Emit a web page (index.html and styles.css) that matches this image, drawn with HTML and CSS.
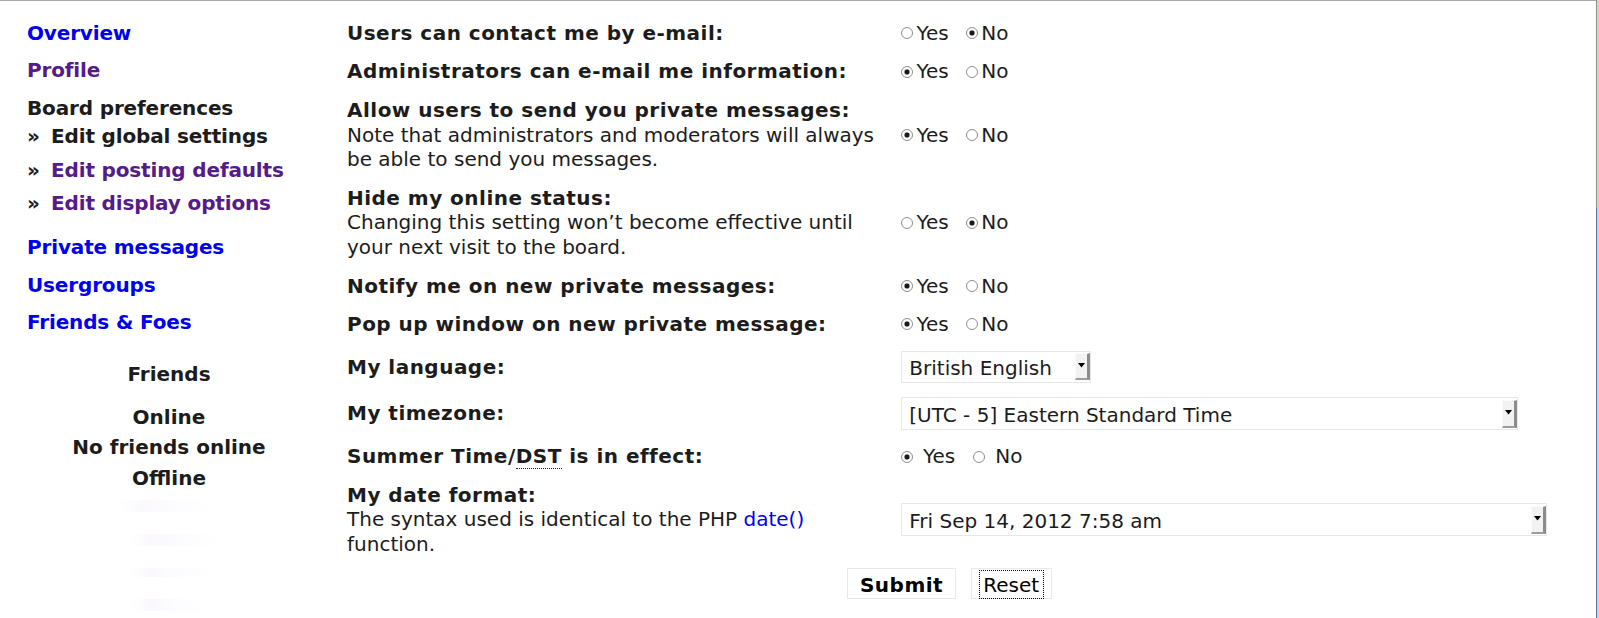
FILE: index.html
```html
<!DOCTYPE html>
<html lang="en">
<head>
<meta charset="utf-8">
<title>User Control Panel - Edit global settings</title>
<link rel="stylesheet" href="styles.css">
</head>
<body>
<div class="page">
  <nav class="sidebar">
    <ul class="nav">
      <li class="nav-item"><a class="link" href="#">Overview</a></li>
      <li class="nav-item"><a class="link visited" href="#">Profile</a></li>
      <li class="nav-item active">
        <span class="nav-head">Board preferences</span>
        <ul class="subnav">
          <li><span class="raquo">»</span><span class="current">Edit global settings</span></li>
          <li><span class="raquo">»</span><a class="link visited" href="#">Edit posting defaults</a></li>
          <li><span class="raquo">»</span><a class="link visited" href="#">Edit display options</a></li>
        </ul>
      </li>
      <li class="nav-item"><a class="link" href="#">Private messages</a></li>
      <li class="nav-item"><a class="link" href="#">Usergroups</a></li>
      <li class="nav-item"><a class="link" href="#">Friends &amp; Foes</a></li>
    </ul>
    <div class="friends">
      <h3 class="friends-title">Friends</h3>
      <div class="friends-status">Online</div>
      <div class="friends-note">No friends online</div>
      <div class="friends-status">Offline</div>
      <ul class="friends-list">
        <li class="ghost ghost-1"></li>
        <li class="ghost ghost-2"></li>
        <li class="ghost ghost-3"></li>
        <li class="ghost ghost-4"></li>
      </ul>
    </div>
  </nav>

  <main class="main">
    <form class="prefs">
      <div class="row">
        <div class="label"><span class="label-title">Users can contact me by e-mail:</span></div>
        <div class="control">
          <div class="opts">
            <label class="opt"><input type="radio" name="viewemail">Yes</label>
            <label class="opt"><input type="radio" name="viewemail" checked>No</label>
          </div>
        </div>
      </div>

      <div class="row">
        <div class="label"><span class="label-title">Administrators can e-mail me information:</span></div>
        <div class="control">
          <div class="opts">
            <label class="opt"><input type="radio" name="massemail" checked>Yes</label>
            <label class="opt"><input type="radio" name="massemail">No</label>
          </div>
        </div>
      </div>

      <div class="row">
        <div class="label">
          <span class="label-title">Allow users to send you private messages:</span>
          <span class="label-desc">Note that administrators and moderators will always be able to send you messages.</span>
        </div>
        <div class="control">
          <div class="opts">
            <label class="opt"><input type="radio" name="allowpm" checked>Yes</label>
            <label class="opt"><input type="radio" name="allowpm">No</label>
          </div>
        </div>
      </div>

      <div class="row">
        <div class="label">
          <span class="label-title">Hide my online status:</span>
          <span class="label-desc">Changing this setting won’t become effective until your next visit to the board.</span>
        </div>
        <div class="control">
          <div class="opts">
            <label class="opt"><input type="radio" name="hideonline">Yes</label>
            <label class="opt"><input type="radio" name="hideonline" checked>No</label>
          </div>
        </div>
      </div>

      <div class="row">
        <div class="label"><span class="label-title">Notify me on new private messages:</span></div>
        <div class="control">
          <div class="opts">
            <label class="opt"><input type="radio" name="notifypm" checked>Yes</label>
            <label class="opt"><input type="radio" name="notifypm">No</label>
          </div>
        </div>
      </div>

      <div class="row">
        <div class="label"><span class="label-title">Pop up window on new private message:</span></div>
        <div class="control">
          <div class="opts">
            <label class="opt"><input type="radio" name="popuppm" checked>Yes</label>
            <label class="opt"><input type="radio" name="popuppm">No</label>
          </div>
        </div>
      </div>

      <div class="row">
        <div class="label"><span class="label-title">My language:</span></div>
        <div class="control">
          <div class="select select-lang">
            <span class="select-text">British English</span>
            <span class="select-btn"><svg width="7" height="5" viewBox="0 0 7 5"><polygon points="0,0 7,0 3.5,4.5" fill="#000"/></svg></span>
          </div>
        </div>
      </div>

      <div class="row">
        <div class="label"><span class="label-title">My timezone:</span></div>
        <div class="control">
          <div class="select select-tz">
            <span class="select-text">[UTC - 5] Eastern Standard Time</span>
            <span class="select-btn"><svg width="7" height="5" viewBox="0 0 7 5"><polygon points="0,0 7,0 3.5,4.5" fill="#000"/></svg></span>
          </div>
        </div>
      </div>

      <div class="row">
        <div class="label"><span class="label-title">Summer Time/<abbr class="abbr" title="Daylight Saving Time">DST</abbr> is in effect:</span></div>
        <div class="control">
          <div class="opts opts-wide">
            <label class="opt"><input type="radio" name="dst" checked>Yes</label>
            <label class="opt"><input type="radio" name="dst">No</label>
          </div>
        </div>
      </div>

      <div class="row">
        <div class="label">
          <span class="label-title">My date format:</span>
          <span class="label-desc">The syntax used is identical to the PHP <a class="link plain" href="#">date()</a> function.</span>
        </div>
        <div class="control">
          <div class="select select-date">
            <span class="select-text">Fri Sep 14, 2012 7:58 am</span>
            <span class="select-btn"><svg width="7" height="5" viewBox="0 0 7 5"><polygon points="0,0 7,0 3.5,4.5" fill="#000"/></svg></span>
          </div>
        </div>
      </div>

      <div class="actions">
        <button type="button" class="btn btn-primary">Submit</button>
        <button type="button" class="btn btn-reset"><span class="focus-ring">Reset</span></button>
      </div>
    </form>
  </main>

  <div class="edge">
    <div class="edge-top"></div>
    <div class="edge-bottom"></div>
  </div>
</div>
</body>
</html>
```

FILE: styles.css
```css
html, body {
  margin: 0;
  padding: 0;
  background: #ffffff;
}

body {
  font-family: "DejaVu Sans", "Liberation Sans", sans-serif;
  font-size: 20px;
  line-height: 24.5px;
  color: #1c1c1c;
}

.page {
  display: flex;
  min-height: 618px;
  box-sizing: border-box;
  border-top: 1px solid #a9a9a9;
}

/* ---------- sidebar ---------- */
.sidebar {
  width: 338px;
  flex: none;
  padding-top: 19.8px;
  box-sizing: border-box;
}

.nav {
  list-style: none;
  margin: 0;
  padding: 0 0 0 27px;
  font-weight: bold;
  letter-spacing: -0.15px;
}

.nav-item {
  margin-bottom: 13px;
}

.nav-item.active {
  margin-bottom: 19.3px;
}

.nav-head {
  display: block;
  color: #1c1c1c;
}

.subnav {
  list-style: none;
  margin: 3.8px 0 0 0;
  padding: 0;
}

.subnav li {
  margin-bottom: 9.2px;
}

.subnav li:last-child {
  margin-bottom: 0;
}

.raquo {
  display: inline-block;
  width: 24px;
  color: #1c1c1c;
}

.current {
  color: #1c1c1c;
}

.link {
  color: #0000ee;
  text-decoration: none;
}

.link.visited {
  color: #551a8b;
}

.link.plain {
  font-weight: normal;
}

.friends {
  margin-top: 27.7px;
  text-align: center;
  font-weight: bold;
}

.friends-title {
  margin: 0 0 18.1px 0;
  font-size: 20px;
  line-height: 24.5px;
}

.friends-status {
  margin-bottom: 5.2px;
}

.friends-note {
  margin-bottom: 6.5px;
}

.friends-list {
  list-style: none;
  margin: 9.7px 0 0 0;
  padding: 0;
  display: flex;
  flex-direction: column;
  align-items: center;
}

.ghost {
  height: 12px;
  margin-bottom: 22px;
  background: linear-gradient(90deg, rgba(255,255,255,0), rgba(232,224,245,0.22) 25%, rgba(244,240,250,0.18) 70%, rgba(255,255,255,0));
}

.ghost-1 { width: 90px; margin-left: -8px; }
.ghost-2 { width: 91px; margin-left: 10px; }
.ghost-3 { width: 82px; height: 9px; margin-left: 4px; }
.ghost-4 { width: 77px; margin-left: 1px; }

/* ---------- main form ---------- */
.main {
  flex: 1;
  padding: 12.7px 44px 0 9px;
  box-sizing: border-box;
}

.prefs {
  margin: 0;
}

.row {
  display: grid;
  grid-template-columns: 554px 1fr;
  align-items: center;
  padding: 7.1px 0;
}

.label {
  padding-right: 14px;
}

.label-title {
  display: block;
  font-weight: bold;
  letter-spacing: 0.48px;
}

.label-desc {
  display: block;
  font-weight: normal;
  letter-spacing: 0;
}

.abbr {
  text-decoration: none;
  border-bottom: 1px dotted #1c1c1c;
}

.control {
  display: flex;
  align-items: center;
}

.opts {
  display: flex;
  align-items: center;
  gap: 17px;
}

.opt {
  display: flex;
  align-items: center;
  gap: 3.5px;
}

.opts-wide {
  gap: 18px;
}

.opts-wide .opt {
  gap: 10px;
}

.opt input {
  -webkit-appearance: none;
  appearance: none;
  width: 12px;
  height: 12px;
  margin: 0;
  border: 1px solid #8e8e8e;
  border-radius: 50%;
  background: #ffffff;
  box-sizing: border-box;
  flex: none;
}

.opt input:checked {
  background: radial-gradient(circle at center, #1a1a1a 0, #1a1a1a 2.1px, #9a9a9a 2.6px, #ffffff 3.2px);
}

/* selects */
.select {
  display: flex;
  align-items: stretch;
  height: 33px;
  box-sizing: border-box;
  border: 1px solid #e8e8e8;
  padding: 1.5px 0.5px 1.5px 0;
  background: #ffffff;
}

.select-lang {
  width: 190px;
  height: 32px;
}

.select-tz {
  width: 617px;
}

.select-date {
  width: 646px;
}

.select-text {
  flex: 1;
  padding: 3px 0 0 7.3px;
  white-space: nowrap;
  overflow: hidden;
}

.select-btn {
  flex: none;
  width: 15px;
  box-sizing: border-box;
  background: #f2f2f2;
  border-top: 1px solid #fbfbfb;
  border-left: 1px solid #fbfbfb;
  border-right: 3px solid #8c8c8c;
  border-bottom: 2px solid #9c9c9c;
  display: flex;
  align-items: center;
  justify-content: center;
}

.select-btn svg {
  display: block;
  margin-top: -2px;
}

/* buttons */
.actions {
  display: flex;
  justify-content: center;
  gap: 15px;
  margin-top: 4.6px;
}

.btn {
  font-family: inherit;
  font-size: 20px;
  line-height: 24.5px;
  color: #000000;
  background: #ffffff;
  border: 1px solid #e8e8e8;
  border-radius: 0;
  height: 31px;
  box-sizing: border-box;
  margin: 0;
}

.btn-primary {
  font-weight: bold;
  letter-spacing: 0.5px;
  padding: 4px 11.5px 0.5px;
}

.btn-reset {
  font-weight: normal;
  padding: 2px 8px 0.5px;
}

.focus-ring {
  display: inline-block;
  padding: 2px 3.5px 0;
  outline: 1px dotted #000000;
  outline-offset: 0;
}

/* right window edge */
.edge {
  width: 3px;
  flex: none;
  display: flex;
  flex-direction: column;
  margin-top: -1px;
}

.edge-top {
  height: 208px;
  box-sizing: border-box;
  border-left: 1px solid #8f8f8f;
  background: #d6d2ca;
}

.edge-bottom {
  flex: 1;
  box-sizing: border-box;
  border-left: 1px solid #5f7699;
  background: #bfd4ef;
}
```
